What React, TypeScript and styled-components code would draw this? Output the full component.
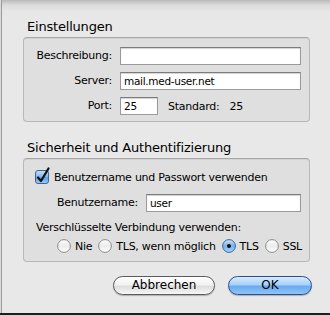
import styled, { createGlobalStyle } from "styled-components";

const GlobalStyle = createGlobalStyle`
  html, body {
    margin: 0;
    padding: 0;
    background: #d2d2d2;
  }
  body {
    font-family: "DejaVu Sans", "Liberation Sans", sans-serif;
    color: #000;
  }
`;

const Sheet = styled.div`
  box-sizing: border-box;
  width: 330px;
  height: 315px;
  padding: 19px 18px 0 23px;
  background: linear-gradient(#b9b9b9 0px, #dcdcdc 5px, #e6e6e6 11px, #e8e8e8 20px);
  box-shadow: inset 1px 0 0 #dadada, inset 2px 0 0 #9c9c9c;
  border-bottom: 2px solid #1e1e1e;
  display: flex;
  flex-direction: column;
`;

const Section = styled.section<{ $gap?: number }>`
  margin-right: 2px;
  margin-top: ${(p) => p.$gap ?? 0}px;
`;

const SectionTitle = styled.h2`
  margin: 0 0 2px;
  padding-left: 4px;
  height: 16px;
  line-height: 16px;
  font-size: 13px;
  font-weight: normal;
  letter-spacing: -0.2px;
`;

const Box = styled.div`
  border: 1px solid #b8b8b8;
  border-top-color: #a6a6a6;
  border-radius: 4px;
  background: #dfdfdf;
  box-shadow: inset 0 1px 0 #d2d2d2;
`;

const FormGrid = styled.div`
  display: grid;
  grid-template-columns: 88px 181px;
  column-gap: 8px;
  row-gap: 7px;
  padding: 9px 0 6px 0;
`;

const Label = styled.label`
  font-size: 11px;
  letter-spacing: -0.25px;
  line-height: 18px;
  text-align: right;
  white-space: nowrap;
`;

const TextField = styled.input<{ $width?: number }>`
  box-sizing: border-box;
  width: ${(p) => (p.$width ? `${p.$width}px` : "100%")};
  height: 18px;
  margin: 0;
  padding: 0 3px;
  border: 1px solid #9a9a9a;
  border-top-color: #7c7c7c;
  box-shadow: inset 0 1px 1px rgba(0, 0, 0, 0.18);
  background: #fff;
  font-family: "DejaVu Sans", sans-serif;
  font-size: 10.5px;
  letter-spacing: -0.3px;
  color: #000;
  outline: none;
`;

const PortRow = styled.div`
  display: flex;
  align-items: center;
  font-size: 11px;
  letter-spacing: -0.25px;
`;

const StandardText = styled.span<{ $left: number }>`
  margin-left: ${(p) => p.$left}px;
`;

const AuthBody = styled.div`
  display: flex;
  flex-direction: column;
  padding: 10px 7px 7px 0;
`;

const CheckRow = styled.div`
  display: flex;
  align-items: center;
  gap: 5px;
  height: 16px;
  padding-left: 11px;
  font-size: 11px;
  letter-spacing: -0.25px;
`;

const UserRow = styled.div`
  display: flex;
  align-items: center;
  gap: 8px;
  margin-top: 9px;
`;

const UserLabel = styled(Label)`
  width: 114px;
`;

const Caption = styled.div`
  margin-top: 8px;
  padding-left: 12px;
  height: 16px;
  line-height: 16px;
  font-size: 11px;
  letter-spacing: -0.25px;
`;

const RadioRow = styled.div`
  display: flex;
  justify-content: space-between;
  align-items: center;
  margin-top: 2px;
  height: 16px;
  padding: 0 0 0 33px;
`;

const RadioItem = styled.label`
  display: flex;
  align-items: center;
  gap: 4px;
  font-size: 11px;
  letter-spacing: -0.25px;
  white-space: nowrap;
`;

const ButtonRow = styled.div`
  display: flex;
  justify-content: flex-end;
  gap: 13px;
  margin-top: 14px;
`;

const AquaButton = styled.button<{ $width: number; $primary?: boolean }>`
  box-sizing: border-box;
  width: ${(p) => p.$width}px;
  height: 19px;
  padding: 0;
  border-radius: 10px;
  border: 1px solid ${(p) => (p.$primary ? "#2b4f8e" : "#5c5c5c")};
  background: ${(p) =>
    p.$primary
      ? "linear-gradient(#d6ebfd 0%, #a9d1f7 45%, #6aaaf0 55%, #8fc4f7 100%)"
      : "linear-gradient(#ffffff 0%, #f2f2f2 45%, #dedede 55%, #f6f6f6 100%)"};
  box-shadow: 0 1px 1px rgba(0, 0, 0, 0.25);
  font-family: "DejaVu Sans", sans-serif;
  font-size: 12px;
  color: #000;
  line-height: 17px;
`;

const Checkbox = () => (
  <svg width="14" height="14" viewBox="0 0 14 14" style={{ overflow: "visible" }}>
    <defs>
      <linearGradient id="cbg" x1="0" y1="0" x2="0" y2="1">
        <stop offset="0" stopColor="#c9e2fa" />
        <stop offset="0.5" stopColor="#7fb6ef" />
        <stop offset="0.55" stopColor="#5c9fe8" />
        <stop offset="1" stopColor="#9fd0fb" />
      </linearGradient>
    </defs>
    <rect x="0.5" y="0.5" width="13" height="13" rx="2.5" fill="url(#cbg)" stroke="#3f6594" />
    <path d="M3 7.5 L6 11 L13.5 -1.5" fill="none" stroke="#111" strokeWidth="2.2" strokeLinecap="round" strokeLinejoin="round" />
  </svg>
);

const Radio = ({ checked }: { checked?: boolean }) => (
  <svg width="14" height="14" viewBox="0 0 14 14">
    <defs>
      <linearGradient id="rw" x1="0" y1="0" x2="0" y2="1">
        <stop offset="0" stopColor="#fdfdfd" />
        <stop offset="0.5" stopColor="#ececec" />
        <stop offset="1" stopColor="#ffffff" />
      </linearGradient>
      <linearGradient id="rb" x1="0" y1="0" x2="0" y2="1">
        <stop offset="0" stopColor="#cde5fb" />
        <stop offset="0.5" stopColor="#78b2ee" />
        <stop offset="1" stopColor="#a6d4fb" />
      </linearGradient>
    </defs>
    <circle
      cx="7"
      cy="7"
      r="6.4"
      fill={checked ? "url(#rb)" : "url(#rw)"}
      stroke={checked ? "#3b6597" : "#8a8a8a"}
      strokeWidth="1"
    />
    {checked && <circle cx="7" cy="7" r="2" fill="#111" />}
  </svg>
);

const encryption = [
  { label: "Nie", checked: false },
  { label: "TLS, wenn möglich", checked: false },
  { label: "TLS", checked: true },
  { label: "SSL", checked: false },
];

const App = () => {
  return (
    <>
      <GlobalStyle />
      <Sheet>
        <Section>
          <SectionTitle>Einstellungen</SectionTitle>
          <Box>
            <FormGrid>
              <Label>Beschreibung:</Label>
              <TextField type="text" readOnly value="" />
              <Label>Server:</Label>
              <TextField type="text" readOnly value="mail.med-user.net" />
              <Label>Port:</Label>
              <PortRow>
                <TextField type="text" readOnly value="25" $width={38} />
                <StandardText $left={10}>Standard:</StandardText>
                <StandardText $left={10}>25</StandardText>
              </PortRow>
            </FormGrid>
          </Box>
        </Section>

        <Section $gap={18}>
          <SectionTitle>Sicherheit und Authentifizierung</SectionTitle>
          <Box>
            <AuthBody>
              <CheckRow>
                <Checkbox />
                <span>Benutzername und Passwort verwenden</span>
              </CheckRow>
              <UserRow>
                <UserLabel>Benutzername:</UserLabel>
                <TextField type="text" readOnly value="user" $width={155} />
              </UserRow>
              <Caption>Verschlüsselte Verbindung verwenden:</Caption>
              <RadioRow>
                {encryption.map((opt) => (
                  <RadioItem key={opt.label}>
                    <Radio checked={opt.checked} />
                    {opt.label}
                  </RadioItem>
                ))}
              </RadioRow>
            </AuthBody>
          </Box>
        </Section>

        <ButtonRow>
          <AquaButton $width={102}>Abbrechen</AquaButton>
          <AquaButton $width={84} $primary>
            OK
          </AquaButton>
        </ButtonRow>
      </Sheet>
    </>
  );
};

export default App;
